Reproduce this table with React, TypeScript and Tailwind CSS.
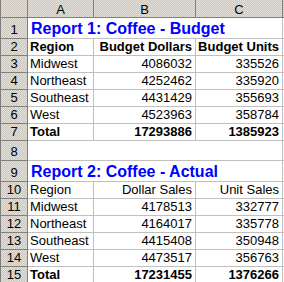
import React from "react";

type Row = {
  n: number;
  h: string;
  title?: string;
  cells?: string[];
  bold?: boolean;
  merged?: boolean;
};

const rows: Row[] = [
  { n: 1, h: "h-[21px]", title: "Report 1: Coffee - Budget" },
  { n: 2, h: "h-[17px]", cells: ["Region", "Budget Dollars", "Budget Units"], bold: true },
  { n: 3, h: "h-[17px]", cells: ["Midwest", "4086032", "335526"] },
  { n: 4, h: "h-[17px]", cells: ["Northeast", "4252462", "335920"] },
  { n: 5, h: "h-[17px]", cells: ["Southeast", "4431429", "355693"] },
  { n: 6, h: "h-[17px]", cells: ["West", "4523963", "358784"] },
  { n: 7, h: "h-[17px]", cells: ["Total", "17293886", "1385923"], bold: true },
  { n: 8, h: "h-[20px]", merged: true },
  { n: 9, h: "h-[21px]", title: "Report 2: Coffee - Actual" },
  { n: 10, h: "h-[17px]", cells: ["Region", "Dollar Sales", "Unit Sales"] },
  { n: 11, h: "h-[17px]", cells: ["Midwest", "4178513", "332777"] },
  { n: 12, h: "h-[17px]", cells: ["Northeast", "4164017", "335778"] },
  { n: 13, h: "h-[17px]", cells: ["Southeast", "4415408", "350948"] },
  { n: 14, h: "h-[17px]", cells: ["West", "4473517", "356763"] },
  { n: 15, h: "h-[17px]", cells: ["Total", "17231455", "1376266"], bold: true },
];

const hdrBg =
  "bg-[repeating-conic-gradient(#cbc7bf_0%_25%,#e3e0d9_0%_50%)] bg-size-[2px_2px]";

export default function App() {
  return (
    <div
      className="w-[284px] h-[282px] overflow-hidden bg-white text-black text-[13px] leading-[15px]"
      style={{ fontFamily: '"Liberation Sans", Arial, sans-serif' }}
    >
      {/* column header */}
      <div className="flex h-[18px]">
        <div className={`w-[28px] shrink-0 border-l border-r border-b border-[#808080] ${hdrBg}`} />
        {[
          ["A", "w-[66px]"],
          ["B", "w-[102px]"],
          ["C", "w-[87px]"],
        ].map(([l, w]) => (
          <div
            key={l}
            className={`${w} shrink-0 border-r border-b border-[#808080] ${hdrBg} flex items-end justify-center`}
          >
            {l}
          </div>
        ))}
        <div className={`flex-1 border-b border-[#808080] ${hdrBg}`} />
      </div>
      {rows.map((r) => (
        <div key={r.n} className={`flex ${r.h}`}>
          <div
            className={`w-[28px] shrink-0 border-l border-r border-b border-[#808080] ${hdrBg} flex items-end justify-center pb-[1px]`}
          >
            {r.n}
          </div>
          {r.title !== undefined ? (
            <div className="w-[255px] shrink-0 border-r border-b border-[#c0c0c0] flex items-end pl-[3px] text-[16px] leading-[18px] font-bold text-[#0000ff] whitespace-nowrap">
              {r.title}
            </div>
          ) : r.merged ? (
            <div className="w-[255px] shrink-0 border-r border-b border-[#c0c0c0]" />
          ) : (
            <>
              <div
                className={`w-[66px] shrink-0 border-r border-b border-[#c0c0c0] flex items-end pl-[2px] pb-[1px] whitespace-nowrap ${
                  r.bold ? "font-bold" : ""
                }`}
              >
                {r.cells![0]}
              </div>
              <div
                className={`w-[102px] shrink-0 border-r border-b border-[#c0c0c0] flex items-end justify-end pr-[3px] pb-[1px] whitespace-nowrap ${
                  r.bold ? "font-bold" : ""
                }`}
              >
                {r.cells![1]}
              </div>
              <div
                className={`w-[87px] shrink-0 border-r border-b border-[#c0c0c0] flex items-end justify-end pr-[3px] pb-[1px] whitespace-nowrap ${
                  r.bold ? "font-bold" : ""
                }`}
              >
                {r.cells![2]}
              </div>
            </>
          )}
          <div className="flex-1 border-b border-[#c0c0c0]" />
        </div>
      ))}
    </div>
  );
}
